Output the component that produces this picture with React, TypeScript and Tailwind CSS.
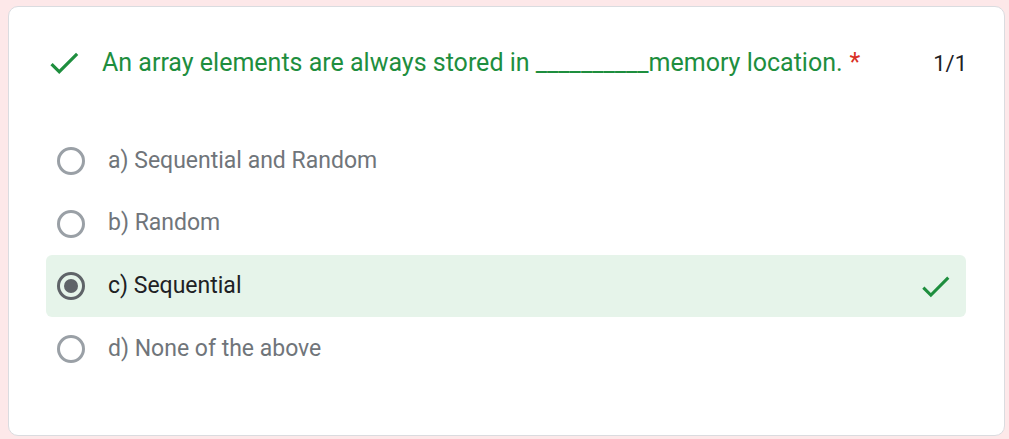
import React from 'react'

const options = [
  { label: 'a) Sequential and Random', selected: false },
  { label: 'b) Random', selected: false },
  { label: 'c) Sequential', selected: true },
  { label: 'd) None of the above', selected: false },
]

function Check({ className }: { className?: string }) {
  return (
    <svg className={className} viewBox="0 0 24 24" fill="currentColor">
      <path d="M9 16.17L4.83 12l-1.42 1.41L9 19 21 7l-1.41-1.41z" />
    </svg>
  )
}

function Radio({ selected }: { selected: boolean }) {
  return (
    <div
      className={
        'w-[28px] h-[28px] rounded-full border-[3px] flex items-center justify-center ' +
        (selected ? 'border-[#5f6368]' : 'border-[#9aa0a6]')
      }
    >
      {selected && <div className="w-[14px] h-[14px] rounded-full bg-[#5f6368]" />}
    </div>
  )
}

export default function App() {
  return (
    <div className="w-[1009px] h-[439px] bg-[#fde8e9] pt-[6px] pl-[8px]" style={{ fontFamily: 'Roboto, sans-serif' }}>
      <div className="w-[997px] h-[430px] bg-white border border-[#dadce0] rounded-[10px] pt-[37px] pl-[36px] pr-[38px]">
        <div className="flex items-center h-[38px]">
          <Check className="w-[38px] h-[38px] text-[#1e8e3e]" />
          <div className="ml-[19px] text-[25px] text-[#1e8e3e] leading-[38px]">
            An array elements are always stored in __________memory location.
            <span className="text-[#d93025] ml-[7px]">*</span>
          </div>
          <div className="ml-auto text-[22px] text-[#202124] mr-[-1px]">1/1</div>
        </div>
        <div className="mt-[48px] ml-[1px] flex flex-col">
          {options.map((o) => (
            <div
              key={o.label}
              className={
                'flex items-center h-[62px] pl-[11px] pr-[12px] rounded-[6px] mb-[0.67px] ' +
                (o.selected ? 'bg-[#e6f4ea]' : '')
              }
            >
              <Radio selected={o.selected} />
              <div className={'ml-[23px] text-[23px] ' + (o.selected ? 'text-[#202124]' : 'text-[#70757a]')}>
                {o.label}
              </div>
              {o.selected && <Check className="ml-auto w-[37px] h-[37px] text-[#1e8e3e]" />}
            </div>
          ))}
        </div>
      </div>
    </div>
  )
}
